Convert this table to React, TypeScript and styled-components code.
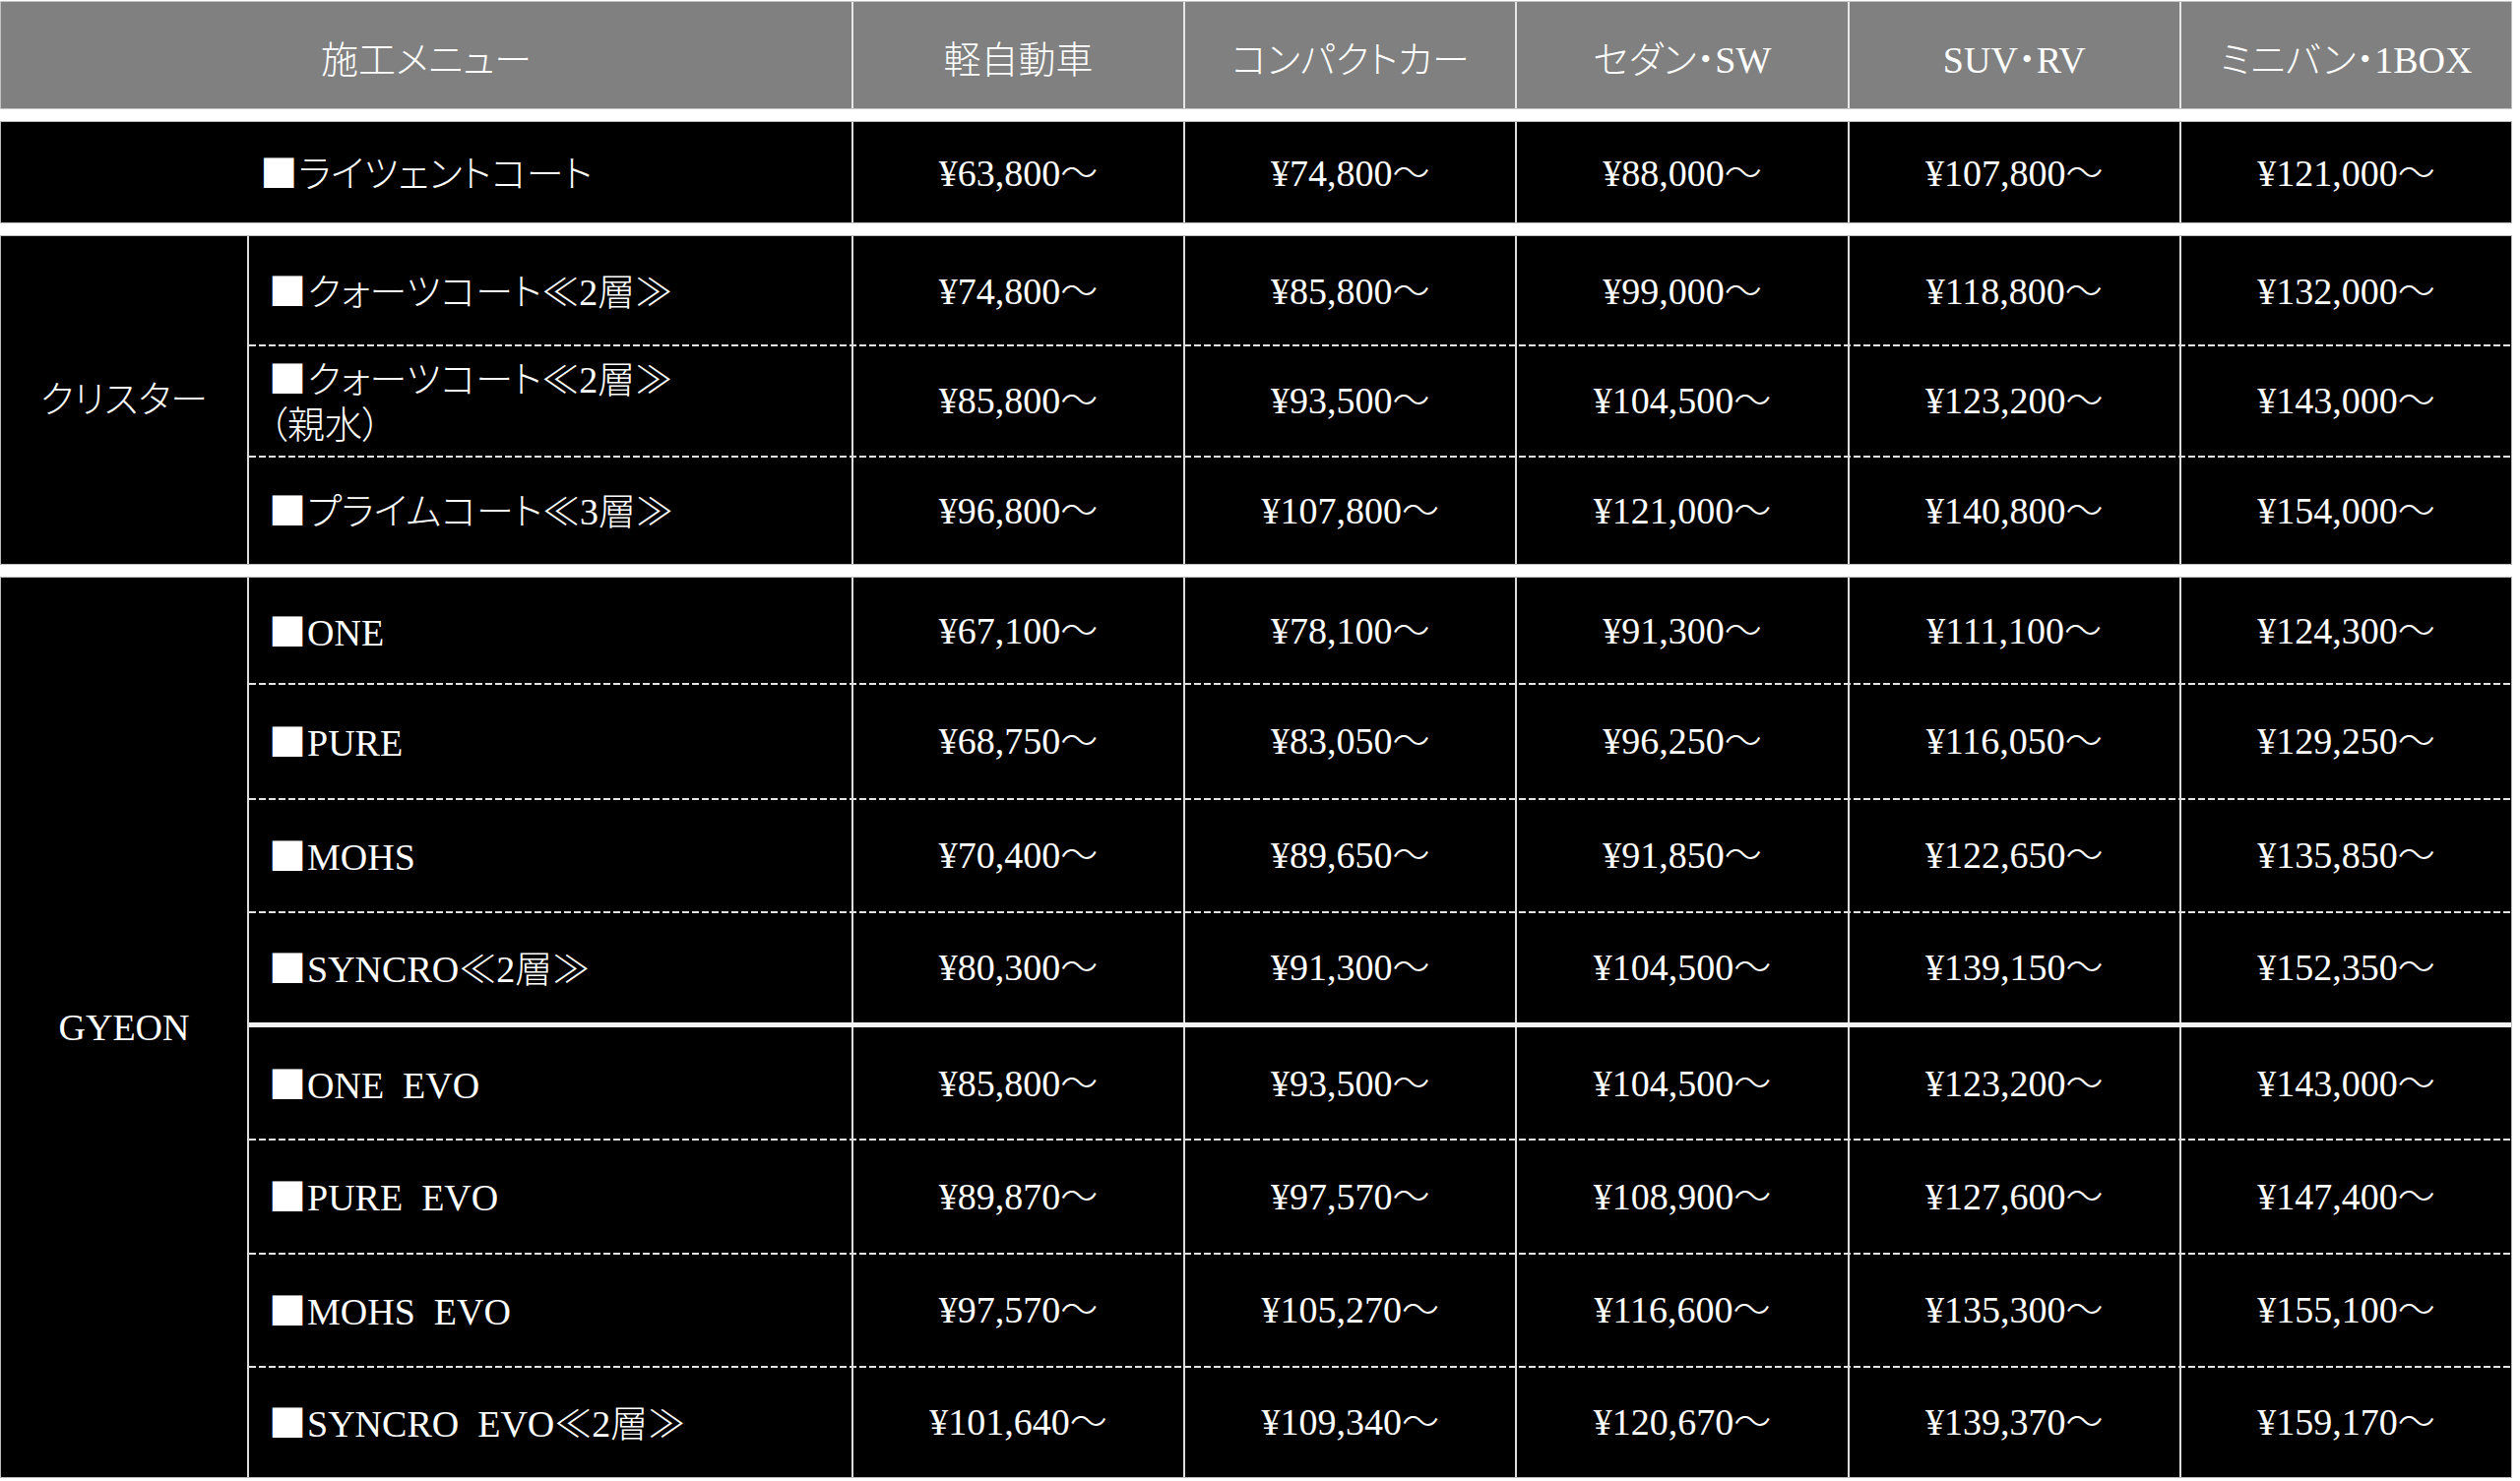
import { createGlobalStyle, styled } from 'styled-components';

const GlobalStyle = createGlobalStyle`
  * { box-sizing: border-box; }
  body {
    margin: 0;
    background: #fff;
    font-family: "Liberation Serif", "Noto Sans CJK JP", serif;
    font-weight: 300;
    font-feature-settings: "palt";
  }
`

const headers = ['軽自動車', 'コンパクトカー', 'セダン・SW', 'SUV・RV', 'ミニバン・1BOX']

const crystar = [
  { name: 'クォーツコート≪2層≫', h: 110, prices: ['¥74,800～', '¥85,800～', '¥99,000～', '¥118,800～', '¥132,000～'] },
  { name: 'クォーツコート≪2層≫\n（親水）', h: 113, prices: ['¥85,800～', '¥93,500～', '¥104,500～', '¥123,200～', '¥143,000～'] },
  { name: 'プライムコート≪3層≫', h: 110, prices: ['¥96,800～', '¥107,800～', '¥121,000～', '¥140,800～', '¥154,000～'] },
]

const gyeon = [
  { name: 'ONE', h: 107, prices: ['¥67,100～', '¥78,100～', '¥91,300～', '¥111,100～', '¥124,300～'] },
  { name: 'PURE', h: 117, prices: ['¥68,750～', '¥83,050～', '¥96,250～', '¥116,050～', '¥129,250～'] },
  { name: 'MOHS', h: 115, prices: ['¥70,400～', '¥89,650～', '¥91,850～', '¥122,650～', '¥135,850～'] },
  { name: 'SYNCRO≪2層≫', h: 113, prices: ['¥80,300～', '¥91,300～', '¥104,500～', '¥139,150～', '¥152,350～'] },
  { name: 'ONE EVO', h: 118, prices: ['¥85,800～', '¥93,500～', '¥104,500～', '¥123,200～', '¥143,000～'], thick: true },
  { name: 'PURE EVO', h: 116, prices: ['¥89,870～', '¥97,570～', '¥108,900～', '¥127,600～', '¥147,400～'] },
  { name: 'MOHS EVO', h: 115, prices: ['¥97,570～', '¥105,270～', '¥116,600～', '¥135,300～', '¥155,100～'] },
  { name: 'SYNCRO EVO≪2層≫', h: 113, prices: ['¥101,640～', '¥109,340～', '¥120,670～', '¥139,370～', '¥159,170～'] },
]

type Sep = 'none' | 'dash' | 'thick'

function PriceRow({ name, prices, sep, height }: { name: string; prices: string[]; sep: Sep; height: number }) {
  return (
    <Row $sep={sep} $h={height}>
      <MenuCell>
        <span><Square>■</Square>{name}</span>
      </MenuCell>
      {prices.map((p, i) => (
        <PriceCell key={i}>{p}</PriceCell>
      ))}
    </Row>
  )
}

export default function App() {
  return (
    <>
      <GlobalStyle />
      <Table>
        <Header>
          <HeadCell>施工メニュー</HeadCell>
          {headers.map(h => (
            <HeadCell key={h}>{h}</HeadCell>
          ))}
        </Header>

        <SingleRow>
          <MenuCell $center>
            <span><Square>■</Square>ライツェントコート</span>
          </MenuCell>
          {['¥63,800～', '¥74,800～', '¥88,000～', '¥107,800～', '¥121,000～'].map((p, i) => (
            <PriceCell key={i}>{p}</PriceCell>
          ))}
        </SingleRow>

        <Group>
          <GroupLabel>クリスター</GroupLabel>
          <Rows>
            {crystar.map((r, i) => (
              <PriceRow key={i} name={r.name} prices={r.prices} sep={i === 0 ? 'none' : 'dash'} height={r.h} />
            ))}
          </Rows>
        </Group>

        <Group>
          <GroupLabel>GYEON</GroupLabel>
          <Rows>
            {gyeon.map((r, i) => (
              <PriceRow
                key={i}
                name={r.name}
                prices={r.prices}
                sep={i === 0 ? 'none' : r.thick ? 'thick' : 'dash'}
                height={r.h}
              />
            ))}
          </Rows>
        </Group>
      </Table>
    </>
  )
}

const Table = styled.div`
  width: 2552px;
  display: flex;
  flex-direction: column;
  gap: 12px;
  padding-top: 1px;
  color: #fff;
  font-size: 38px;
  line-height: 1.22;
`

const Header = styled.div`
  display: grid;
  grid-template-columns: 864px repeat(5, 1fr);
  height: 110px;
  background: #808080;
  border: 1px solid #c4c4c4;
  line-height: normal;
`

const HeadCell = styled.div`
  display: flex;
  align-items: center;
  justify-content: center;
  white-space: nowrap;
  padding-top: 2px;

  & + & {
    border-left: 2px solid #e6e6e6;
  }
`

const SingleRow = styled.div`
  display: grid;
  grid-template-columns: 864px repeat(5, 1fr);
  height: 104px;
  background: #000;
  border: 1px solid #bdbdbd;
`

const Group = styled.div`
  display: grid;
  grid-template-columns: 252px 1fr;
  background: #000;
  border: 1px solid #bdbdbd;
`

const GroupLabel = styled.div`
  display: flex;
  align-items: center;
  justify-content: center;
  border-right: 2px solid #dcdcdc;
`

const Rows = styled.div`
  display: flex;
  flex-direction: column;
`

const Row = styled.div<{ $sep: Sep; $h: number }>`
  display: grid;
  grid-template-columns: 612px repeat(5, 1fr);
  height: ${p => p.$h}px;
  background: ${p =>
    p.$sep === 'dash'
      ? 'repeating-linear-gradient(to right, #e4e4e4 0 7px, transparent 7px 10px) top left / 100% 2px no-repeat, #000'
      : '#000'};
  border-top: ${p => (p.$sep === 'thick' ? '5px solid #f4f4f4' : 'none')};
`

const MenuCell = styled.div<{ $center?: boolean }>`
  display: flex;
  align-items: center;
  justify-content: ${p => (p.$center ? 'center' : 'flex-start')};
  padding-left: ${p => (p.$center ? '0' : '20px')};
  padding-top: 2px;
  white-space: pre-line;
  word-spacing: 0.25em;
`

const Square = styled.span`
  font-family: "Noto Sans CJK JP", sans-serif;
  font-feature-settings: normal;
  margin-right: 1px;
`

const PriceCell = styled.div`
  display: flex;
  align-items: center;
  justify-content: center;
  padding-top: 2px;
  border-left: 2px solid #dcdcdc;
  white-space: nowrap;
`
